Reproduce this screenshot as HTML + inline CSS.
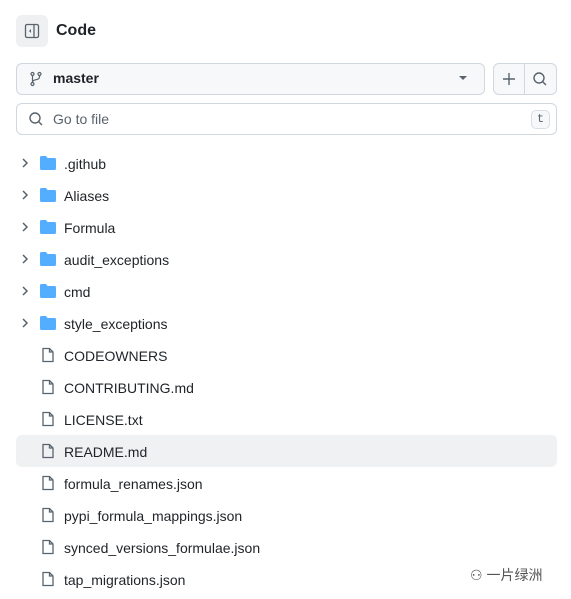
<!DOCTYPE html><html><head><style>
body{margin:0;width:571px;height:599px;background:#fff;font-family:"Liberation Sans",sans-serif;color:#1f2328;position:relative;overflow:hidden}
.a{position:absolute}
.row{position:absolute;left:16px;width:541px;height:31px;font-size:14px}
.row span{position:absolute;left:48px;top:8px}
.row svg{position:absolute}
</style></head><body>
<div class="a" style="left:16px;top:15px;width:32px;height:32px;background:#eef0f2;border-radius:6px"></div>
<svg class="a" style="left:24px;top:23px" width="16" height="16" viewBox="0 0 16 16"><rect x="1.5" y="1.5" width="13" height="13" rx="1.5" fill="none" stroke="#59636e" stroke-width="1.3"/><line x1="10" y1="2" x2="10" y2="14" stroke="#59636e" stroke-width="1.3"/><path d="M7 6 L5 8 L7 10Z" fill="#59636e"/></svg>
<div class="a" style="left:56px;top:22px;font-size:16px;font-weight:bold">Code</div>
<div class="a" style="left:16px;top:63px;width:467px;height:30px;background:#f6f8fa;border:1px solid #d0d7de;border-radius:6px"></div>
<svg class="a" style="left:28px;top:71px" width="16" height="16" viewBox="0 0 16 16" fill="none" stroke="#59636e" stroke-width="1.2"><circle cx="4.5" cy="3" r="1.5"/><circle cx="4.5" cy="13" r="1.5"/><circle cx="11.5" cy="3" r="1.5"/><path d="M4.5 4.5V11.5M11.5 4.5V6c0 2-2 2.5-4 2.8-1.5.3-3 .8-3 2.7"/></svg>
<div class="a" style="left:53px;top:70px;font-size:14px;font-weight:bold">master</div>
<svg class="a" style="left:459px;top:76px" width="8" height="5"><path d="M0 0H8L4 4Z" fill="#59636e"/></svg>
<div class="a" style="left:493px;top:63px;width:62px;height:30px;background:#f6f8fa;border:1px solid #d0d7de;border-radius:6px"></div>
<div class="a" style="left:524px;top:64px;width:1px;height:30px;background:#d0d7de"></div>
<svg class="a" style="left:501px;top:71px" width="16" height="16"><path d="M8 2V14M2 8H14" stroke="#59636e" stroke-width="1.4"/></svg>
<svg class="a" style="left:532px;top:71px" width="16" height="16" fill="none" stroke="#59636e" stroke-width="1.4"><circle cx="7" cy="7" r="5"/><path d="M10.5 10.5L14 14"/></svg>
<div class="a" style="left:16px;top:103px;width:539px;height:30px;background:#fff;border:1px solid #d0d7de;border-radius:6px"></div>
<svg class="a" style="left:28px;top:111px" width="16" height="16" fill="none" stroke="#59636e" stroke-width="1.4"><circle cx="7" cy="7" r="5"/><path d="M10.5 10.5L14 14"/></svg>
<div class="a" style="left:53px;top:111px;font-size:14px;color:#59636e">Go to file</div>
<div class="a" style="left:531px;top:110px;width:17px;height:17px;border:1px solid #d8dee4;border-radius:5px;background:#f6f8fa;font-size:12px;text-align:center;line-height:17px;color:#59636e;font-family:'Liberation Mono',monospace">t</div>
<div class="a" style="left:16px;top:435px;width:541px;height:32px;background:#f0f1f3;border-radius:6px"></div>
<div id="list"></div>
<div class="a" style="left:470px;top:565px;font-size:14px;color:#555;font-family:'Liberation Sans','Noto Sans CJK SC',sans-serif">⚇ 一片绿洲</div>
<script>
var d=[".github","Aliases","Formula","audit_exceptions","cmd","style_exceptions"],f=["CODEOWNERS","CONTRIBUTING.md","LICENSE.txt","README.md","formula_renames.json","pypi_formula_mappings.json","synced_versions_formulae.json","tap_migrations.json"],h="";
d.forEach(function(n,i){var y=148+32*i;h+='<div class="row" style="top:'+y+'px"><svg style="left:4px;top:8px" width="10" height="14"><path d="M3 3L7 7L3 11" fill="none" stroke="#59636e" stroke-width="1.5"/></svg><svg style="left:24px;top:8px" width="16" height="14"><path d="M0 1.5Q0 0 1.5 0H6L7.5 2H14.5Q16 2 16 3.5V12.5Q16 14 14.5 14H1.5Q0 14 0 12.5Z" fill="#54aeff"/></svg><span>'+n+'</span></div>'});
f.forEach(function(n,i){var y=340+32*i;h+='<div class="row" style="top:'+y+'px"><svg style="left:24px;top:7px" width="16" height="16" fill="none" stroke="#59636e" stroke-width="1.3"><path d="M3 1.5H9.5L13 5V14.5H3Z M9.5 1.5V5H13"/></svg><span>'+n+'</span></div>'});
document.getElementById("list").innerHTML=h;
</script>
</body></html>
